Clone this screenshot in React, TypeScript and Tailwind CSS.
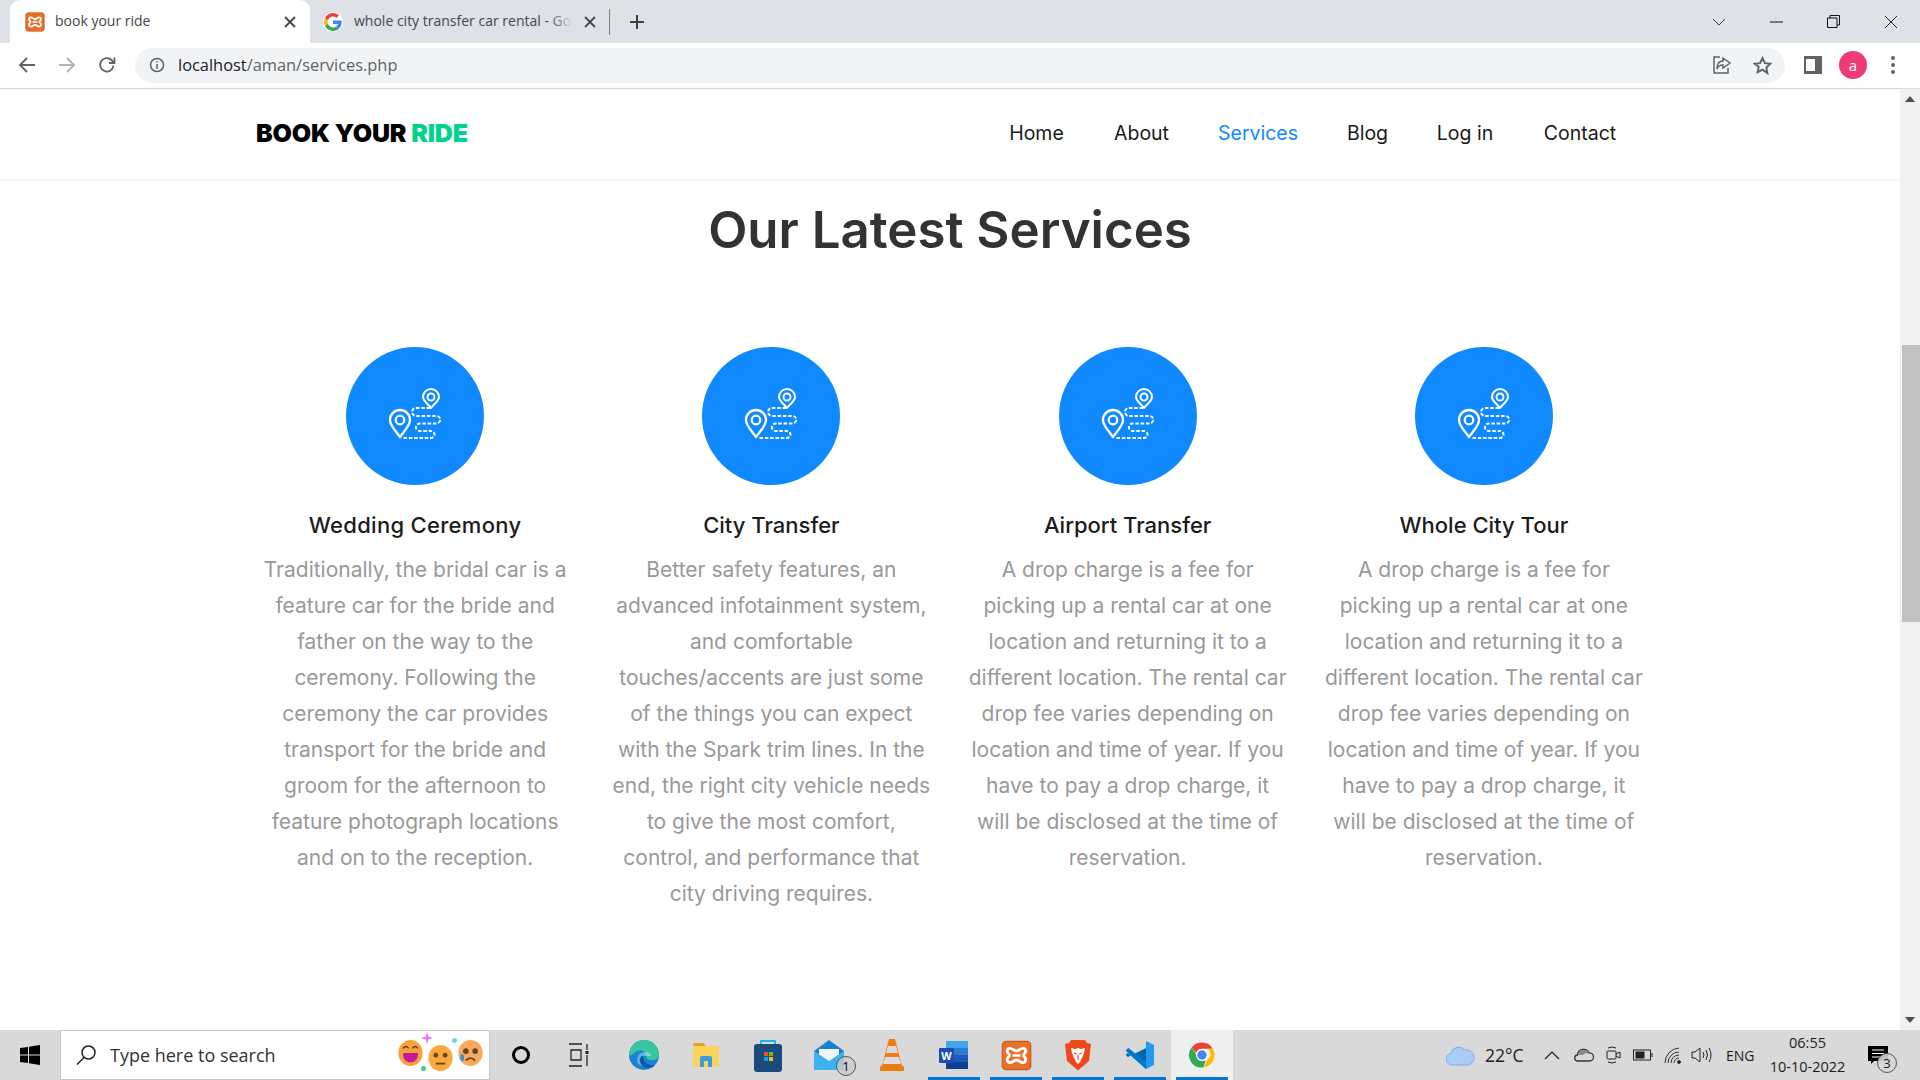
import React from "react";

const services = [
  { t: "Wedding Ceremony", x: "tracking-[0.3px]", l: ["Traditionally, the bridal car is a","feature car for the bride and","father on the way to the","ceremony. Following the","ceremony the car provides","transport for the bride and","groom for the afternoon to","feature photograph locations","and on to the reception."] },
  { t: "City Transfer", x: "", l: ["Better safety features, an","advanced infotainment system,","and comfortable","touches/accents are just some","of the things you can expect","with the Spark trim lines. In the","end, the right city vehicle needs","to give the most comfort,","control, and performance that","city driving requires."] },
  { t: "Airport Transfer", x: "", l: ["A drop charge is a fee for","picking up a rental car at one","location and returning it to a","different location. The rental car","drop fee varies depending on","location and time of year. If you","have to pay a drop charge, it","will be disclosed at the time of","reservation."] },
  { t: "Whole City Tour", x: "", l: ["A drop charge is a fee for","picking up a rental car at one","location and returning it to a","different location. The rental car","drop fee varies depending on","location and time of year. If you","have to pay a drop charge, it","will be disclosed at the time of","reservation."] },
];

const nav = [
  { t: "Home", w: "w-[55px]" },
  { t: "About", w: "w-[55px]" },
  { t: "Services", w: "w-[78px]", c: "text-[#1089ff]" },
  { t: "Blog", w: "w-[41px]" },
  { t: "Log in", w: "w-[54px]" },
  { t: "Contact", w: "w-[76px]" },
];

function Xampp({ s }: { s: number }) {
  return (
    <svg width={s} height={s} viewBox="0 0 24 24">
      <rect x="1" y="1" width="22" height="22" rx="3" fill="#e8702a" stroke="#c65f22" />
      <path d="M7 6.500c2.200 0 3 2 5 2s2.800-2 5-2c2.600 0 2.600 3 1 4.200-.7.5-.7 1.600 0 2.100 1.600 1.200 1.600 4.700-1 4.700-2.200 0-3-2-5-2s-2.800 2-5 2c-2.600 0-2.600-3.500-1-4.700.7-.5.7-1.600 0-2.100C4.400 9.500 4.400 6.500 7 6.500z" fill="none" stroke="#fff" strokeWidth="2.200" />
      <path d="M9 12h6" stroke="#fff" strokeWidth="2" />
    </svg>
  );
}

function Chrome({ s }: { s: number }) {
  return (
    <svg width={s} height={s} viewBox="0 0 48 48">
      <path d="M24 4a20 20 0 0 1 17.300 10H24a10 10 0 0 0-9.500 7L7.700 11.500A20 20 0 0 1 24 4z" fill="#ea4335" />
      <path d="M41.300 14A20 20 0 0 1 26 43.900L33 31a10 10 0 0 0 0-17z" fill="#fbbc05" />
      <path d="M26 43.900A20 20 0 0 1 7.700 11.500L16 26a10 10 0 0 0 14 6.500z" fill="#34a853" />
      <circle cx="24" cy="24" r="9.500" fill="#fff" />
      <circle cx="24" cy="24" r="7.500" fill="#4285f4" />
    </svg>
  );
}

function GoogleG() {
  return (
    <svg width="18" height="18" viewBox="0 0 48 48">
      <path fill="#ea4335" d="M24 9.500c3.500 0 6.700 1.300 9.100 3.500l6.800-6.800C35.800 2.400 30.200 0 24 0 14.600 0 6.500 5.400 2.600 13.200l7.900 6.100C12.400 13.700 17.700 9.500 24 9.500z" />
      <path fill="#4285f4" d="M47 24.500c0-1.600-.1-3.100-.4-4.500H24v9h13c-.6 3-2.200 5.500-4.800 7.200l7.700 6c4.500-4.200 7.100-10.300 7.100-17.700z" />
      <path fill="#fbbc05" d="M10.500 28.700A14.500 14.500 0 0 1 10.500 19.300l-7.900-6.100A24 24 0 0 0 2.600 34.800z" />
      <path fill="#34a853" d="M24 48c6.500 0 11.900-2.100 15.900-5.800l-7.700-6c-2.200 1.500-4.900 2.300-8.200 2.300-6.300 0-11.600-4.200-13.500-9.800l-7.900 6.100C6.500 42.600 14.600 48 24 48z" />
    </svg>
  );
}

function RouteIcon() {
  return (
    <svg width="60" height="57" viewBox="0 0 60 57" fill="none" stroke="#fff" strokeLinejoin="round">
      <path d="M14 52C10 46 4 41 4 35a10 10 0 0 1 20 0C24 41 18 46 14 52z" strokeWidth="2.300" />
      <circle cx="14" cy="35" r="4.300" strokeWidth="2.200" />
      <path d="M45 23C42 19 37 16 37 12a8 8 0 0 1 16 0C53 16 48 19 45 23z" strokeWidth="2" />
      <circle cx="45" cy="12" r="3.500" strokeWidth="1.900" />
      <path d="M44 23H30a4 4 0 0 0 0 8H50.500a3.750 3.750 0 0 1 0 7.500H33.700a3.750 3.750 0 0 0 0 7.500H45a3.500 3.500 0 0 1 0 7H17" strokeWidth="2" strokeDasharray="3.500 1.800" />
    </svg>
  );
}

function Scrollbar() {
  return (
    <div className="w-[20px] h-full bg-[#f1f1f1] flex flex-col items-center justify-between">
      <div className="h-[20px] flex items-center justify-center">
        <svg width="10" height="6" viewBox="0 0 10 6"><path d="M5 0l5 6H0z" fill="#505050" /></svg>
      </div>
      <div className="flex-1 w-full pl-[2px] pt-[236px]">
        <div className="h-[277px] bg-[#c1c1c1]" />
      </div>
      <div className="h-[20px] flex items-center justify-center">
        <svg width="10" height="6" viewBox="0 0 10 6"><path d="M5 6L0 0h10z" fill="#505050" /></svg>
      </div>
    </div>
  );
}

function TabBar() {
  return (
    <div className="h-[43px] bg-[#dee1e6] flex items-stretch pl-[10px] shrink-0">
      <div className="w-[300px] bg-white rounded-t-[10px] flex items-center pl-[15px] pr-[14px] gap-[10px]">
        <Xampp s={20} />
        <span className="flex-1 text-[14px] leading-[18px] pb-[2px] text-[#45474a]">book your ride</span>
        <svg width="12" height="12" viewBox="0 0 12 12" stroke="#45474a" strokeWidth="1.800"><path d="M1 1l10 10M11 1L1 11" /></svg>
      </div>
      <div className="w-[299px] flex items-center pl-[13px] pr-[11px] gap-[11px]">
        <div className="w-[20px] h-[20px] rounded-full bg-white flex items-center justify-center shrink-0"><GoogleG /></div>
        <span className="relative w-[219px] text-[14px] leading-[18px] pb-[2px] text-[#45474a] overflow-hidden whitespace-nowrap">
          whole city transfer car rental - Go
          <span className="absolute right-0 top-0 bottom-0 w-[24px] bg-gradient-to-r from-transparent to-[#dee1e6]" />
        </span>
        <svg width="12" height="12" viewBox="0 0 12 12" stroke="#45474a" strokeWidth="1.800"><path d="M1 1l10 10M11 1L1 11" /></svg>
      </div>
      <div className="w-px h-[26px] bg-[#7f8184] self-center" />
      <div className="w-[54px] flex items-center justify-center">
        <svg width="16" height="16" viewBox="0 0 16 16" stroke="#3c4043" strokeWidth="2"><path d="M8 1v14M1 8h14" /></svg>
      </div>
      <div className="flex-1" />
      <div className="w-[58px] flex items-center justify-center">
        <svg width="14" height="8" viewBox="0 0 14 8" fill="none" stroke="#3c4043"><path d="M1 1l6 6 6-6" /></svg>
      </div>
      <div className="w-[57px] flex items-center justify-center">
        <svg width="13" height="2" viewBox="0 0 13 2"><path d="M0 1h13" stroke="#111" /></svg>
      </div>
      <div className="w-[57px] flex items-center justify-center">
        <svg width="13" height="13" viewBox="0 0 13 13" fill="none" stroke="#111"><path d="M.5 3h9.500v9.500H.5zM3 3V.5h9.500V10H10" /></svg>
      </div>
      <div className="w-[58px] flex items-center justify-center">
        <svg width="14" height="14" viewBox="0 0 14 14" stroke="#222"><path d="M1 1l12 12M13 1L1 13" /></svg>
      </div>
    </div>
  );
}

function ToolBar() {
  return (
    <div className="h-[46px] bg-white border-b border-[#dadce0] flex items-center shrink-0 pb-px">
      <div className="w-[135px] flex items-center shrink-0">
        <div className="w-[54px] flex justify-center">
          <svg width="18" height="18" viewBox="0 0 18 18" fill="none" stroke="#5f6368" strokeWidth="1.800"><path d="M17 9H2M9 2L2 9l7 7" /></svg>
        </div>
        <div className="w-[26px] flex justify-center">
          <svg width="18" height="18" viewBox="0 0 18 18" fill="none" stroke="#b0b2b5" strokeWidth="1.800"><path d="M1 9h15M9 2l7 7-7 7" /></svg>
        </div>
        <div className="w-[54px] flex justify-center">
          <svg width="18" height="18" viewBox="0 0 18 18" fill="none" stroke="#5f6368" strokeWidth="1.800"><path d="M15.500 9.500A6.700 6.700 0 1 1 13.500 4L16 6.500" /><path d="M16.500 1.500v5.500H11" /></svg>
        </div>
      </div>
      <div className="w-[1650px] h-[35px] bg-[#f1f3f4] rounded-full flex items-center pl-[14px] pr-[11px] shrink-0">
        <svg width="16" height="16" viewBox="0 0 16 16" fill="none" stroke="#5f6368" strokeWidth="1.500"><circle cx="8" cy="8" r="6.500" /><path d="M8 7v5M8 4v1.500" /></svg>
        <span className="ml-[13px] pt-[1px] text-[16.400px] text-[#202124]">localhost<span className="text-[#5f6368]">/aman/services.php</span></span>
        <div className="flex-1" />
        <svg className="mr-[21px]" width="20" height="20" viewBox="0 0 20 20" fill="none" stroke="#5f6368" strokeWidth="1.500"><path d="M8 2H2v16h14v-5" /><path d="M11 3l7 5-7 5v-3c-3 0-5 1-6 4 0-5 2-8 6-8z" /></svg>
        <svg className="mr-[2px]" width="19" height="19" viewBox="0 0 24 24" fill="none" stroke="#5f6368" strokeWidth="2.400"><path d="M12 2.500l3 6.500 7 .8-5.200 4.800 1.400 7L12 17.200l-6.200 3.400 1.400-7L2 9.800 9 9z" /></svg>
      </div>
      <div className="w-[53px] flex justify-center ml-[1px]">
        <div className="w-[18px] h-[18px] bg-[#5f6368] pl-[2px] py-[3px] pr-[7px]"><div className="w-full h-full bg-white" /></div>
      </div>
      <div className="w-[28px] h-[28px] rounded-full bg-[#ee3a78] text-white text-[15px] flex items-center justify-center">a</div>
      <div className="w-[51px] flex flex-col items-center gap-[3px]">
        <div className="w-[4px] h-[4px] rounded-full bg-[#5f6368]" />
        <div className="w-[4px] h-[4px] rounded-full bg-[#5f6368]" />
        <div className="w-[4px] h-[4px] rounded-full bg-[#5f6368]" />
      </div>
    </div>
  );
}

function Page() {
  return (
    <div className="flex-1 min-h-0 flex bg-white">
      <div className="flex-1 min-w-0 flex flex-col font-['Inter','Open_Sans',sans-serif]">
        <header className="h-[90px] shrink-0 pl-[256px] pr-[282px] flex items-center justify-between shadow-[0_1px_5px_rgba(0,0,0,0.08)]">
          <div className="font-black text-[25px] tracking-[-0.15px] text-black">BOOK YOUR <span className="text-[#01d28e]">RIDE</span></div>
          <nav className="flex gap-[50px] text-[19.500px] text-[#1a1a1a]">
            {nav.map(n => (
              <span key={n.t} className={`${n.w} whitespace-nowrap flex justify-center ${n.c ?? ""}`}>{n.t}</span>
            ))}
          </nav>
        </header>
        <h1 className="mt-[13px] text-center font-semibold text-[51px] leading-[75px] text-[#333333]">Our Latest Services</h1>
        <div className="mt-[80px] ml-[237px] w-[1425px] grid grid-cols-4">
          {services.map(s => (
            <div key={s.t} className="flex flex-col items-center">
              <div className="w-[138px] h-[138px] rounded-full bg-[#1089ff] flex items-center justify-center pl-[2px] pb-[5px]">
                <RouteIcon />
              </div>
              <h3 className={`mt-[24px] text-[22px] leading-[33px] font-medium text-[#1c1c1c] ${s.x}`}>{s.t}</h3>
              <div className="mt-[10px] text-center text-[21px] leading-[36px] text-[#999999]">
                {s.l.map(x => <div key={x} className="whitespace-nowrap">{x}</div>)}
              </div>
            </div>
          ))}
        </div>
      </div>
      <Scrollbar />
    </div>
  );
}

function TaskBtn({ children, active, on }: { children: React.ReactNode; active?: boolean; on?: boolean }) {
  return (
    <div className={`relative w-[62px] h-full flex items-center justify-center ${on ? "bg-[#efefef]" : ""}`}>
      {children}
      {active && <div className="absolute bottom-0 left-[5px] right-[5px] h-[3px] bg-[#0078d4]" />}
    </div>
  );
}

function Face({ c, mouth }: { c: string; mouth: React.ReactNode }) {
  return (
    <svg width="27" height="28" viewBox="0 0 28 30">
      <ellipse cx="14" cy="15" rx="13" ry="14" fill={c} />
      {mouth}
    </svg>
  );
}

function TaskBar() {
  return (
    <div className="h-[50px] shrink-0 bg-[#d9d9d9] flex items-stretch font-['Open_Sans',sans-serif] text-[#1c1c1c]">
      <div className="w-[60px] flex items-center justify-center">
        <svg width="20" height="20" viewBox="0 0 20 20" fill="#000"><path d="M0 3l8-1v7.500H0zM9 1.800L20 0v9.500H9zM0 10.500h8V18l-8-1zM9 10.500h11V20L9 18.200z" /></svg>
      </div>
      <div className="w-[430px] bg-white border border-[#c8c8c8] flex items-center pl-[14px]">
        <svg width="22" height="22" viewBox="0 0 22 22" fill="none" stroke="#222" strokeWidth="1.500"><circle cx="13.500" cy="8.500" r="6.500" /><path d="M9 13.500L2 20.500" /></svg>
        <span className="ml-[13px] text-[18px] text-[#333]">Type here to search</span>
        <div className="flex-1" />
        <div className="relative flex items-start gap-[3px] pr-[5px]">
          <Face c="#f9a13d" mouth={<><path d="M6 15h16c0 7-3 10-8 10s-8-3-8-10z" fill="#c2189b" /><path d="M6 10q3-4 6 0M16 10q3-4 6 0" stroke="#642" strokeWidth="1.500" fill="none" /></>} />
          <div className="mt-[5px]">
            <Face c="#fba83f" mouth={<><circle cx="9" cy="12" r="2.500" fill="#642" /><circle cx="19" cy="12" r="2.500" fill="#642" /><path d="M9 21h10" stroke="#642" strokeWidth="2" /></>} />
          </div>
          <Face c="#f9a85f" mouth={<><circle cx="9" cy="13" r="3" fill="#642" /><circle cx="19" cy="13" r="3" fill="#642" /><path d="M9 23q5-5 10 0" stroke="#642" strokeWidth="2" fill="none" /><ellipse cx="5" cy="20" rx="2" ry="4" fill="#3a8fe0" /></>} />
          <svg className="absolute left-[24px] -top-[7px]" width="12" height="12" viewBox="0 0 12 12"><path d="M6 0l1.500 4.500L12 6 7.500 7.500 6 12 4.500 7.500 0 6l4.500-1.500z" fill="#e57ff0" /></svg>
          <div className="absolute left-[55px] -top-[1px] w-[5px] h-[5px] rounded-full bg-[#6fd5ee]" />
          <div className="absolute left-[24px] top-[27px] w-[5px] h-[5px] rounded-full bg-[#3fce7c]" />
        </div>
      </div>
      <div className="w-[61px] flex items-center justify-center">
        <div className="w-[18px] h-[18px] rounded-full border-[3px] border-black" />
      </div>
      <div className="w-[62px] pr-[7px] flex items-center justify-center">
        <svg width="22" height="24" viewBox="0 0 22 24" fill="none" stroke="#222" strokeWidth="1.300"><path d="M1 1h13M1 23h13M3 7h10v10H3zM19 1v6M19 12v11" /><rect x="17.500" y="8" width="3" height="3" fill="#222" stroke="none" /></svg>
      </div>
      <TaskBtn>
        <svg width="32" height="32" viewBox="0 0 32 32">
          <circle cx="16" cy="16" r="15" fill="#1b83d4" />
          <path d="M1 16A15 15 0 0 1 31 16c0 3-3 5-7 5-5 0-6-2-6-4 0-5-5-7-9-5-4 2-7 6-8 4z" fill="#37c6a0" />
          <path d="M9 22c0-6 4-9 8-9s6 2 6 4H15c-3 0-3 8 4 9-5 2-10-1-10-4z" fill="#fff" opacity="0.35" />
          <path d="M15 17c-4 0-5 7 1 11 3 2 8 1 11-2-6 1-12-2-12-9z" fill="#0c59a4" />
        </svg>
      </TaskBtn>
      <TaskBtn>
        <svg width="28" height="26" viewBox="0 0 28 26">
          <path d="M1 3a2 2 0 0 1 2-2h8l3 3h-13z" fill="#e0a422" />
          <rect x="1" y="4" width="26" height="21" rx="1" fill="#f9d35c" />
          <path d="M8 25v-9a2 2 0 0 1 2-2h8a2 2 0 0 1 2 2v9h-4v-6h-4v6z" fill="#3d9bdc" />
        </svg>
      </TaskBtn>
      <TaskBtn>
        <svg width="30" height="34" viewBox="0 0 30 34">
          <path d="M8 9V3h14v6" fill="none" stroke="#27b5e9" strokeWidth="2" />
          <rect x="1" y="6" width="28" height="28" rx="3" fill="#1b4a7c" />
          <rect x="11" y="14" width="4" height="4" fill="#f25022" /><rect x="16" y="14" width="4" height="4" fill="#7fba00" />
          <rect x="11" y="19" width="4" height="4" fill="#00a4ef" /><rect x="16" y="19" width="4" height="4" fill="#ffb900" />
        </svg>
      </TaskBtn>
      <TaskBtn>
        <div className="relative">
          <svg width="32" height="30" viewBox="0 0 32 30">
            <path d="M0 11L15 0l15 11v19H0z" fill="#1b7fd4" />
            <path d="M5 9h20v9l-10 6-10-6z" fill="#f3f6f9" />
            <path d="M0 11l15 10 15-10v19H0z" fill="#3fb0f0" />
          </svg>
          <div className="absolute -right-[10px] -bottom-[6px] w-[20px] h-[20px] rounded-full border border-[#555] bg-[#c8ccd0]/80 text-[13px] leading-[18px] text-center text-black">1</div>
        </div>
      </TaskBtn>
      <TaskBtn>
        <svg width="26" height="34" viewBox="0 0 26 34">
          <path d="M1 29l4-3h16l4 3v3a1 1 0 0 1-1 1H2a1 1 0 0 1-1-1z" fill="#e67e12" />
          <path d="M10 1h6l7 27H3z" fill="#ef7d10" />
          <path d="M9 8h8l2 7H7zM6 19h14l2 7H4z" fill="#dcdcdc" />
        </svg>
      </TaskBtn>
      <TaskBtn active>
        <svg width="30" height="30" viewBox="0 0 30 30">
          <rect x="7" y="1" width="22" height="28" rx="2" fill="#2b7cd3" />
          <rect x="7" y="1" width="22" height="7" fill="#41a5ee" />
          <rect x="7" y="15" width="22" height="7" fill="#185abd" />
          <rect x="7" y="22" width="22" height="7" fill="#103f91" />
          <rect x="0" y="8" width="15" height="15" rx="1" fill="#1a4fb0" />
          <text x="7.500" y="19.500" textAnchor="middle" fontSize="11" fontWeight="700" fill="#fff" fontFamily="Liberation Sans">W</text>
        </svg>
      </TaskBtn>
      <TaskBtn active><Xampp s={31} /></TaskBtn>
      <TaskBtn active>
        <svg width="28" height="32" viewBox="0 0 28 32">
          <path d="M7 1h14l2 3 4 1-2 17-11 9.500L3 22 1 5l4-1z" fill="#f1471d" />
          <path d="M7 9l4 1 3-1 3 1 4-1-1 5-2 5-2 3h-4l-2-3-2-5z" fill="#fff" />
          <path d="M11 22l3 3 3-3-3-1z" fill="#fff" />
          <path d="M10 14l3 1M18 14l-3 1M14 16v5" stroke="#f1471d" strokeWidth="1.200" />
        </svg>
      </TaskBtn>
      <TaskBtn active>
        <svg width="30" height="30" viewBox="0 0 30 30">
          <path d="M21 1l8 4v20l-8 4-11-12 11-8.500z" fill="#1f9cf0" />
          <path d="M21 1v28L3 13 1 14.500v1L3 17l18-9z" fill="#0065a9" opacity="0.95" />
          <path d="M1 10l2.500-2L21 22v7L1 11z" fill="#007acc" />
        </svg>
      </TaskBtn>
      <TaskBtn active on><Chrome s={30} /></TaskBtn>
      <div className="flex-1" />
      <div className="flex items-center">
        <svg className="mr-[10px]" width="30" height="21" viewBox="0 0 30 21"><path d="M7 20a6 6 0 0 1-1-11.800A8 8 0 0 1 20 5a6 6 0 0 1 3 15z" fill="#a9cdf5" stroke="#7fadec" /></svg>
        <span className="w-[40px] text-[17.500px] whitespace-nowrap">22°C</span>
        <svg className="ml-[19px]" width="16" height="9" viewBox="0 0 16 9" fill="none" stroke="#222" strokeWidth="1.200"><path d="M1 8l7-7 7 7" /></svg>
        <svg className="ml-[14px]" width="20" height="14" viewBox="0 0 20 14"><path d="M4 13a3 3 0 0 1-.5-6A6 6 0 0 1 15 5a4 4 0 0 1 1 8z" fill="#d9d9d9" stroke="#333" strokeWidth="1.300" /><path d="M4 7a6 6 0 0 1 11-2c-4 0-5 1-6 2z" fill="#888" /></svg>
        <svg className="ml-[12px]" width="16" height="20" viewBox="0 0 16 20" fill="none" stroke="#222"><rect x="1" y="6" width="9" height="8" rx="1" /><path d="M10 9l4-2v6l-4-2M2 3q4-2 8 0M2 17q4 2 8 0" /></svg>
        <svg className="ml-[11px]" width="20" height="12" viewBox="0 0 20 12" fill="none" stroke="#222"><rect x=".5" y="1" width="17" height="10" /><rect x="3" y="3" width="8" height="6" fill="#222" /><path d="M19 4v4" /></svg>
        <svg className="ml-[11px]" width="18" height="18" viewBox="0 0 18 18" fill="none" stroke="#333"><path d="M1 17A15 15 0 0 1 15 2M4 17A11 11 0 0 1 15 6M7 17a8 8 0 0 1 8-8M10 17a5 5 0 0 1 5-5" /><circle cx="15" cy="16" r="1.500" fill="#222" /></svg>
        <svg className="ml-[9px]" width="21" height="18" viewBox="0 0 21 18" fill="none" stroke="#222"><path d="M1 6h3l5-4v14l-5-4H1zM12 6q2 3 0 6M15 4q3 5 0 10M18 2q4 7 0 14" /></svg>
        <span className="ml-[14px] w-[34px] text-[14px]">ENG</span>
        <div className="w-[95px] text-[14.500px] leading-[24px] text-center">
          <div>06:55</div>
          <div className="whitespace-nowrap">10-10-2022</div>
        </div>
        <div className="relative ml-[13px] mr-[32px]">
          <svg width="20" height="18" viewBox="0 0 20 18"><path d="M0 0h20v15H6l-3 3v-3H0z" fill="#000" /><path d="M4 4h12M4 7.500h12M4 11h8" stroke="#fff" /></svg>
          <div className="absolute left-[9px] top-[7px] w-[20px] h-[20px] rounded-full border border-[#555] bg-[#d5d5d5]/90 text-[13px] leading-[18px] text-center">3</div>
        </div>
      </div>
    </div>
  );
}

export default function App() {
  return (
    <div className="w-[1920px] h-[1080px] flex flex-col overflow-hidden bg-white font-['Open_Sans',sans-serif]">
      <TabBar />
      <ToolBar />
      <div className="flex-1 min-h-0 flex">
        <Page />
      </div>
      <TaskBar />
    </div>
  );
}
